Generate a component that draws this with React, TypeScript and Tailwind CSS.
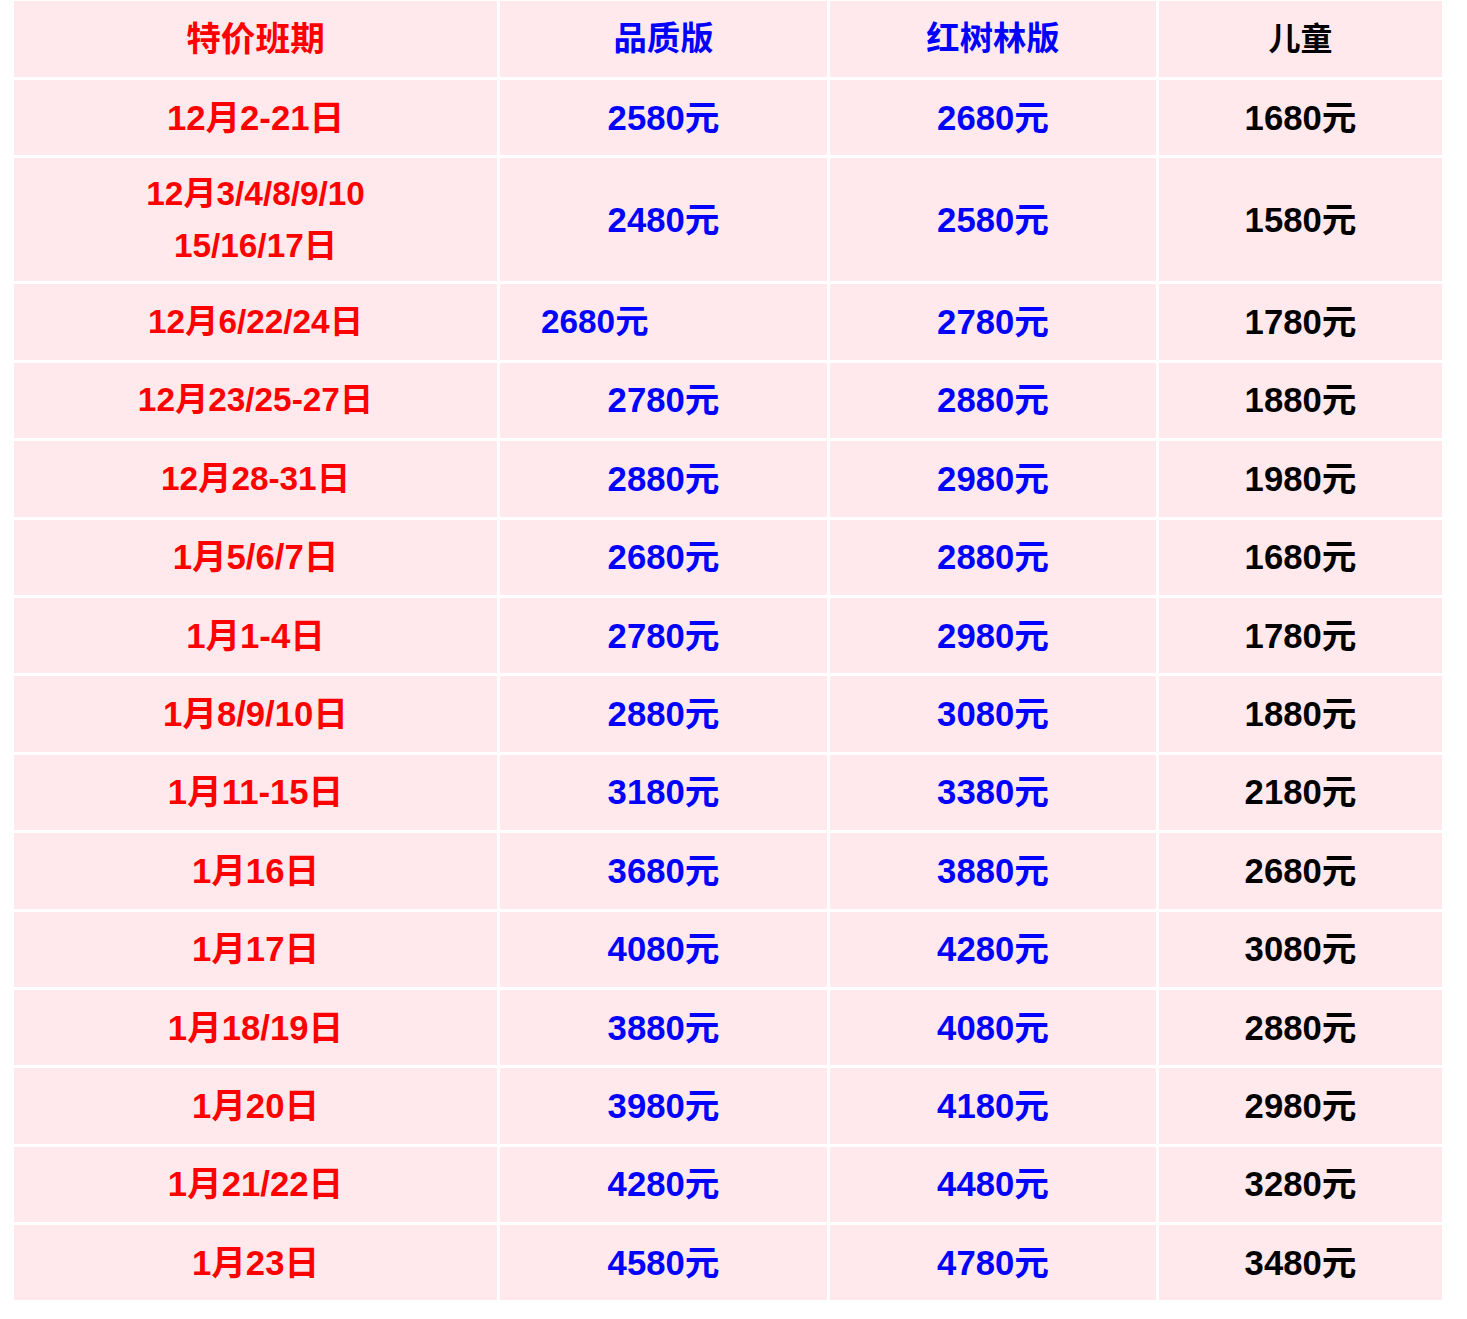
const rows: { date: string[]; q: string; m: string; c: string; small?: boolean; left?: boolean }[] = [
  { date: ["12月2-21日"], q: "2580元", m: "2680元", c: "1680元" },
  { date: ["12月3/4/8/9/10", "15/16/17日"], q: "2480元", m: "2580元", c: "1580元", small: true },
  { date: ["12月6/22/24日"], q: "2680元", m: "2780元", c: "1780元", small: true, left: true },
  { date: ["12月23/25-27日"], q: "2780元", m: "2880元", c: "1880元", small: true },
  { date: ["12月28-31日"], q: "2880元", m: "2980元", c: "1980元", small: true },
  { date: ["1月5/6/7日"], q: "2680元", m: "2880元", c: "1680元" },
  { date: ["1月1-4日"], q: "2780元", m: "2980元", c: "1780元" },
  { date: ["1月8/9/10日"], q: "2880元", m: "3080元", c: "1880元" },
  { date: ["1月11-15日"], q: "3180元", m: "3380元", c: "2180元" },
  { date: ["1月16日"], q: "3680元", m: "3880元", c: "2680元" },
  { date: ["1月17日"], q: "4080元", m: "4280元", c: "3080元" },
  { date: ["1月18/19日"], q: "3880元", m: "4080元", c: "2880元" },
  { date: ["1月20日"], q: "3980元", m: "4180元", c: "2980元" },
  { date: ["1月21/22日"], q: "4280元", m: "4480元", c: "3280元" },
  { date: ["1月23日"], q: "4580元", m: "4780元", c: "3480元" },
];

const grid = "grid grid-cols-[483px_327px_326px_283px] gap-[3px]";
const cell = "flex items-center justify-center bg-[#ffe9ec]";

export default function App() {
  return (
    <div
      className="min-h-[1319px] bg-white pl-[14px] pt-[1px] font-bold text-[34.67px]"
      style={{ fontFamily: '"Liberation Sans", "Noto Sans CJK SC", sans-serif' }}
    >
      <div className="flex w-[1428px] flex-col gap-[3px]">
        <div className={`${grid} h-[76px]`}>
          <div className={`${cell} text-[#ff0000]`}>特价班期</div>
          <div className={`${cell} text-[33.33px] text-[#0000ff]`}>品质版</div>
          <div className={`${cell} text-[33.33px] text-[#0000ff]`}>红树林版</div>
          <div className={`${cell} text-[32px] text-black`}>儿童</div>
        </div>
        {rows.map((r, i) => (
          <div key={i} className={`${grid} ${r.date.length > 1 ? "h-[123px]" : "h-[75.4px]"}`}>
            <div className={`${cell} flex-col leading-[52px] text-[#ff0000] ${r.small ? "text-[33.33px]" : ""}`}>
              {r.date.map((d) => (
                <span key={d}>{d}</span>
              ))}
            </div>
            <div className={`${cell} text-[#0000ff] ${r.left ? "justify-start pl-[41px] text-[33.33px]" : ""}`}>{r.q}</div>
            <div className={`${cell} text-[#0000ff]`}>{r.m}</div>
            <div className={`${cell} text-black`}>{r.c}</div>
          </div>
        ))}
      </div>
    </div>
  );
}
